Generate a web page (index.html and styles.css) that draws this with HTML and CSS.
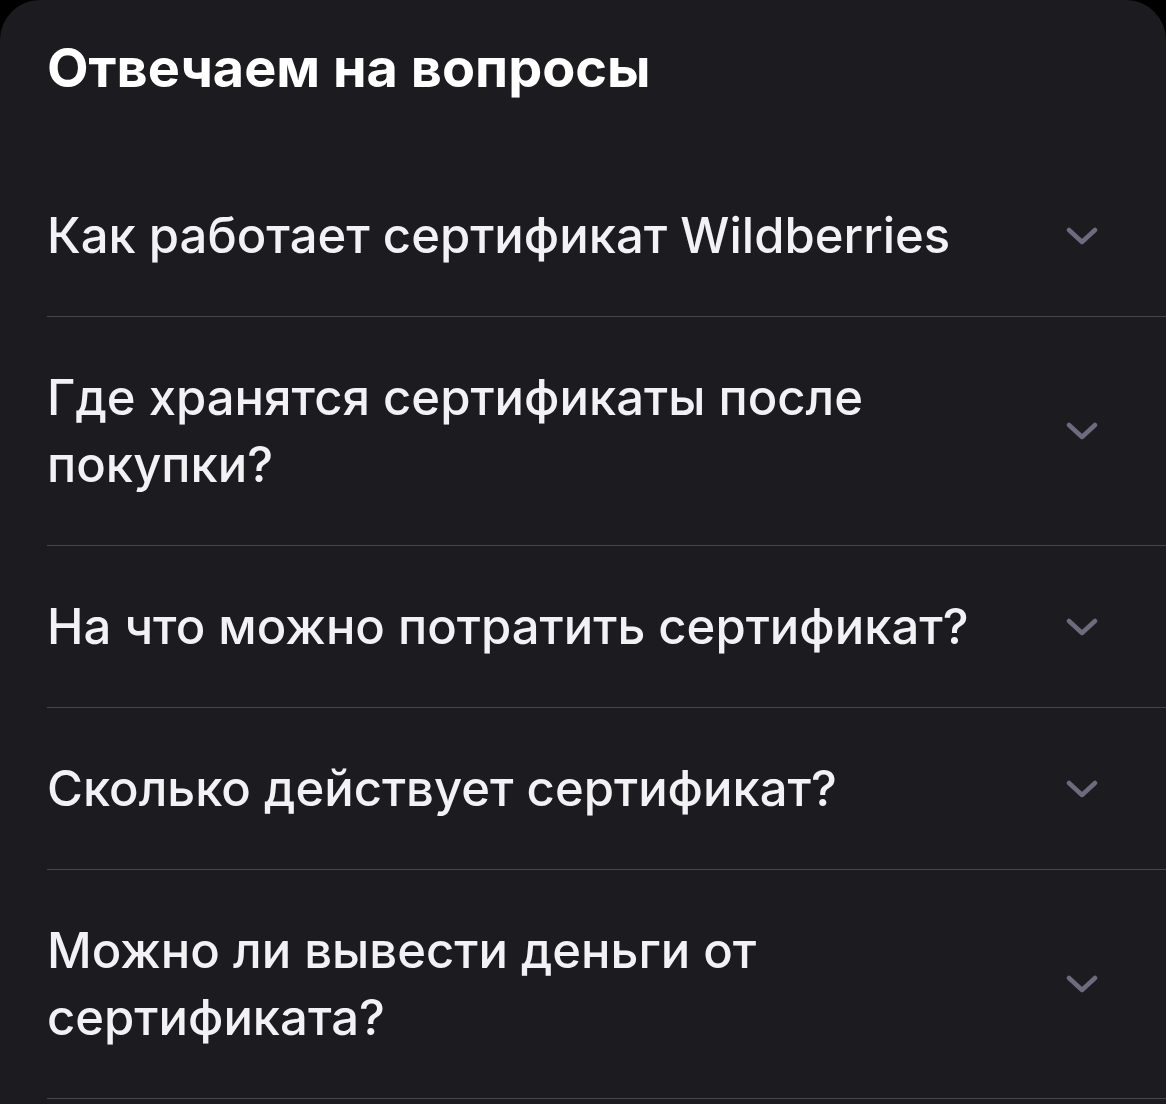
FILE: index.html
```html
<!DOCTYPE html>
<html lang="ru">
<head>
    <meta charset="UTF-8" />
    <meta name="viewport" content="width=device-width, initial-scale=1.0" />
    <title>Вопросы о сертификатах</title>
    <link rel="stylesheet" href="styles.css">
</head>
<body>

<div class="card">
    <h2 class="card-title">Отвечаем на вопросы</h2>

    <!-- Список вопросов -->
    <div class="faq">
        <div class="faq-item">
            <span class="faq-question">Как работает сертификат Wildberries</span>
            <svg class="faq-arrow" viewBox="0 0 32 18"><path d="M3 3 L16 15 L29 3" /></svg>
        </div>
        <div class="faq-item">
            <span class="faq-question">Где хранятся сертификаты после покупки?</span>
            <svg class="faq-arrow" viewBox="0 0 32 18"><path d="M3 3 L16 15 L29 3" /></svg>
        </div>
        <div class="faq-item">
            <span class="faq-question">На что можно потратить сертификат?</span>
            <svg class="faq-arrow" viewBox="0 0 32 18"><path d="M3 3 L16 15 L29 3" /></svg>
        </div>
        <div class="faq-item">
            <span class="faq-question">Сколько действует сертификат?</span>
            <svg class="faq-arrow" viewBox="0 0 32 18"><path d="M3 3 L16 15 L29 3" /></svg>
        </div>
        <div class="faq-item">
            <span class="faq-question">Можно ли вывести деньги от сертификата?</span>
            <svg class="faq-arrow" viewBox="0 0 32 18"><path d="M3 3 L16 15 L29 3" /></svg>
        </div>
    </div>
</div>

</body>
</html>
```

FILE: styles.css
```css
body {
    margin: 0;
    background-color: #000;
    font-family: Inter, "Noto Sans", sans-serif;
}

.card {
    background-color: #1c1b1f;
    border-radius: 40px 40px 0 0;
    min-height: 100vh;
    padding: 36px 0 0 47px;
    box-sizing: border-box;
}

.card-title {
    margin: 0 0 55px;
    font-size: 54px;
    font-weight: 700;
    line-height: 64px;
    color: #fff;
}

/* строка вопроса */
.faq-item {
    display: flex;
    align-items: center;
    justify-content: space-between;
    gap: 40px;
    padding: 47px 68px 47px 0;
    border-bottom: 1px solid #46454a;
}

.faq-question {
    flex: 1;
    font-size: 49px;
    font-weight: 500;
    line-height: 67px;
    color: #f2f2f4;
}

.faq-arrow {
    width: 32px;
    height: 18px;
    flex-shrink: 0;
    fill: none;
    stroke: #6d6b7d;
    stroke-width: 4.5;
    stroke-linecap: round;
    stroke-linejoin: round;
}
```
